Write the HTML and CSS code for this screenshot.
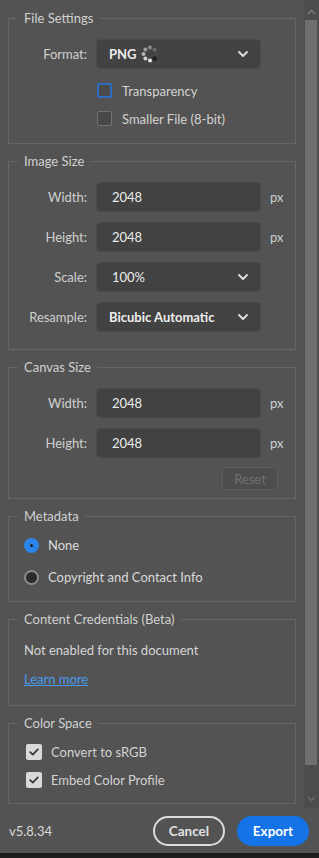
FILE: index.html
```html
<!DOCTYPE html>
<html lang="en">
<head>
<meta charset="utf-8">
<title>Export As</title>
<link rel="stylesheet" href="styles.css">
</head>
<body>
<div class="app">
  <div class="main">
    <div class="content">
      <fieldset class="group g-file">
        <legend>File Settings</legend>
        <div class="row">
          <span class="lbl">Format:</span>
          <div class="field select">
            <span class="val strong">PNG</span>
            <svg class="spinner" width="18" height="18" viewBox="0 0 18 18">
              <circle cx="9" cy="2.5" r="2" fill="#8a8a8a"/>
              <circle cx="13.6" cy="4.4" r="2" fill="#6c6c6c"/>
              <circle cx="15.5" cy="9" r="2" fill="#474747"/>
              <circle cx="13.6" cy="13.6" r="2.2" fill="#1c1c1c"/>
              <circle cx="9" cy="15.5" r="2" fill="#e6e6e6"/>
              <circle cx="4.4" cy="13.6" r="2" fill="#d0d0d0"/>
              <circle cx="2.5" cy="9" r="2" fill="#b4b4b4"/>
              <circle cx="4.4" cy="4.4" r="2" fill="#9c9c9c"/>
            </svg>
            <svg class="chev" width="10" height="6" viewBox="0 0 10 6"><path d="M1 1l4 4 4-4" fill="none" stroke="#e0e0e0" stroke-width="1.8" stroke-linecap="round" stroke-linejoin="round"/></svg>
          </div>
        </div>
        <div class="row opt first-opt">
          <span class="lbl"></span>
          <label class="check"><span class="box box-focus"></span><span>Transparency</span></label>
        </div>
        <div class="row opt second-opt">
          <span class="lbl"></span>
          <label class="check"><span class="box"></span><span>Smaller File (8-bit)</span></label>
        </div>
      </fieldset>

      <fieldset class="group g-image">
        <legend>Image Size</legend>
        <div class="rows">
          <div class="row"><span class="lbl">Width:</span><div class="field input"><span class="val">2048</span></div><span class="unit">px</span></div>
          <div class="row"><span class="lbl">Height:</span><div class="field input"><span class="val">2048</span></div><span class="unit">px</span></div>
          <div class="row"><span class="lbl">Scale:</span><div class="field select"><span class="val num">100%</span><svg class="chev" width="10" height="6" viewBox="0 0 10 6"><path d="M1 1l4 4 4-4" fill="none" stroke="#e0e0e0" stroke-width="1.8" stroke-linecap="round" stroke-linejoin="round"/></svg></div></div>
          <div class="row"><span class="lbl">Resample:</span><div class="field select"><span class="val strong">Bicubic Automatic</span><svg class="chev" width="10" height="6" viewBox="0 0 10 6"><path d="M1 1l4 4 4-4" fill="none" stroke="#e0e0e0" stroke-width="1.8" stroke-linecap="round" stroke-linejoin="round"/></svg></div></div>
        </div>
      </fieldset>

      <fieldset class="group g-canvas">
        <legend>Canvas Size</legend>
        <div class="rows">
          <div class="row"><span class="lbl">Width:</span><div class="field input"><span class="val">2048</span></div><span class="unit">px</span></div>
          <div class="row"><span class="lbl">Height:</span><div class="field input"><span class="val">2048</span></div><span class="unit">px</span></div>
        </div>
        <div class="reset-row"><button class="reset" disabled>Reset</button></div>
      </fieldset>

      <fieldset class="group g-meta">
        <legend>Metadata</legend>
        <label class="radio"><span class="dot dot-on"></span><span>None</span></label>
        <label class="radio radio-2"><span class="dot"></span><span>Copyright and Contact Info</span></label>
      </fieldset>

      <fieldset class="group g-cc">
        <legend>Content Credentials (Beta)</legend>
        <p class="note">Not enabled for this document</p>
        <a class="link" href="#">Learn more</a>
      </fieldset>

      <fieldset class="group g-color">
        <legend>Color Space</legend>
        <label class="check light"><span class="box box-on"><svg width="10" height="8" viewBox="0 0 10 8"><path d="M1.2 4.2l2.6 2.4L8.8 1.4" fill="none" stroke="#3a3a3a" stroke-width="1.8" stroke-linecap="round" stroke-linejoin="round"/></svg></span><span>Convert to sRGB</span></label>
        <label class="check light check-2"><span class="box box-on"><svg width="10" height="8" viewBox="0 0 10 8"><path d="M1.2 4.2l2.6 2.4L8.8 1.4" fill="none" stroke="#3a3a3a" stroke-width="1.8" stroke-linecap="round" stroke-linejoin="round"/></svg></span><span>Embed Color Profile</span></label>
      </fieldset>
    </div>
    <div class="scrollbar">
      <svg class="arrow" width="9" height="6" viewBox="0 0 9 6"><path d="M1 5l3.5-3.5L8 5" fill="none" stroke="#7a7a7a" stroke-width="1.4"/></svg>
      <div class="thumb"></div>
      <svg class="arrow down" width="9" height="6" viewBox="0 0 9 6"><path d="M1 1l3.5 3.5L8 1" fill="none" stroke="#6a6a6a" stroke-width="1.4"/></svg>
    </div>
  </div>
  <div class="footer">
    <span class="version">v5.8.34</span>
    <div class="actions">
      <button class="btn cancel">Cancel</button>
      <button class="btn export">Export</button>
    </div>
  </div>
  <div class="strip"></div>
</div>
</body>
</html>
```

FILE: styles.css
```css
* { box-sizing: border-box; }
html, body { margin: 0; padding: 0; }
body {
  width: 319px;
  height: 858px;
  overflow: hidden;
  background: #535353;
  font-family: Lato, "Open Sans", sans-serif;
  font-size: 13px;
  color: #d2d2d2;
}
.app { display: flex; flex-direction: column; height: 858px; }
.main { display: flex; height: 808px; }
.content {
  width: 304px;
  padding: 10px 0 0 8px;
  display: flex;
  flex-direction: column;
  gap: 9px;
  overflow: hidden;
}

/* groups */
.group {
  margin: 0;
  width: 288px;
  min-width: 0;
  border: 1px solid #656565;
  padding: 13px 0 16px 0;
}
.group legend {
  margin-left: 9px;
  padding: 0 6px;
  height: 16px;
  line-height: 16px;
  color: #d0d0d0;
}
.g-file { padding-bottom: 17px; }
.g-image { padding-bottom: 17px; }
.g-canvas { padding-bottom: 8px; }
.g-meta { padding-bottom: 16px; }
.g-cc { padding-bottom: 16px; }
.g-color { padding-bottom: 15px; }

.rows { display: flex; flex-direction: column; gap: 10px; }
.row { display: flex; align-items: center; }
.lbl {
  width: 78px;
  margin-right: 9px;
  text-align: right;
  color: #d0d0d0;
  flex: none;
}
.field {
  width: 165px;
  height: 30px;
  flex: none;
  background: #424242;
  border: 1px solid #4b4b4b;
  border-radius: 4px;
  display: flex;
  align-items: center;
  padding: 0 0 0 12px;
  color: #ececec;
}
.input { padding-left: 15px; }
.select .val.num { margin-left: 3px; }
.val.strong { font-weight: 700; color: #ededed; }
.spinner { margin-left: 4px; }
.select .chev { margin-left: auto; margin-right: 12px; }
.unit { margin-left: 9px; color: #cfcfcf; }

.opt { height: 15px; }
.first-opt { margin-top: 14px; }
.second-opt { margin-top: 13px; }

.check { display: flex; align-items: center; gap: 10px; color: #d2d2d2; }
.box {
  width: 15px;
  height: 15px;
  border: 1.5px solid #727272;
  border-radius: 2px;
  background: #484848;
  flex: none;
  margin-left: 1px;
}
.box-focus { border: 2px solid #2d6cc0; background: #4a4a4a; }
.light { margin-left: 16px; height: 16px; gap: 9px; }
.box-on {
  width: 16px;
  height: 16px;
  border: none;
  background: #d9d9d9;
  display: flex;
  align-items: center;
  justify-content: center;
  margin-left: 1px;
}
.check-2 { margin-top: 12px; }

.reset-row { display: flex; justify-content: flex-end; margin-top: 9px; padding-right: 17px; }
.reset {
  width: 56px;
  height: 23px;
  background: #4d4d4d;
  border: 1px solid #5d5d5d;
  border-radius: 3px;
  color: #707070;
  font: inherit;
  padding: 0;
}

.radio { display: flex; align-items: center; gap: 9px; height: 16px; margin-left: 15px; color: #dadada; }
.radio-2 { margin-top: 16px; }
.dot {
  width: 15px;
  height: 15px;
  border-radius: 50%;
  background: #2a2a2a;
  border: 2px solid #8c8c8c;
  flex: none;
  display: flex;
  align-items: center;
  justify-content: center;
}
.dot-on { background: #2b84ea; border: none; }
.dot-on::after { content: ""; width: 3px; height: 3px; border-radius: 50%; background: #1b1b1b; }

.note { margin: 0 0 0 15px; line-height: 20px; color: #d6d6d6; }
.link {
  display: block;
  margin: 9px 0 0 15px;
  line-height: 20px;
  width: max-content;
  color: #4a9bf2;
  text-decoration: underline;
}

/* scrollbar */
.scrollbar {
  width: 15px;
  background: #4d4d4d;
  display: flex;
  flex-direction: column;
  align-items: center;
}
.arrow { margin-top: 9px; flex: none; }
.thumb {
  margin-top: 5px;
  width: 12px;
  height: 745px;
  background: #6f6f6f;
  align-self: flex-start;
  margin-left: 1px;
}
.arrow.down { margin-top: auto; margin-bottom: 6px; }

/* footer */
.footer {
  height: 45px;
  display: flex;
  align-items: center;
  justify-content: space-between;
  padding: 0 10px 0 9px;
}
.version { color: #d8d8d8; }
.actions { display: flex; gap: 12px; }
.btn {
  width: 72px;
  height: 30px;
  border-radius: 15px;
  font: inherit;
  font-weight: 700;
  font-size: 13.5px;
  padding: 0;
}
.cancel { background: transparent; border: 2px solid #dcdcdc; color: #e2e2e2; }
.export { background: #1473e6; border: none; color: #ffffff; }
.strip { height: 5px; background: #1e1e1e; }
```
